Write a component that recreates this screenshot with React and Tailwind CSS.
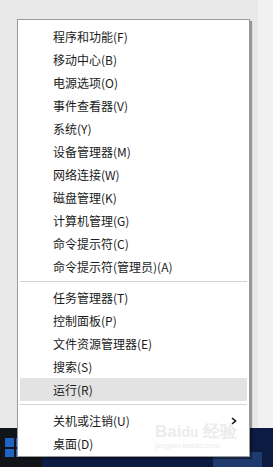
import React from 'react';

const topItems = [
  '程序和功能(F)',
  '移动中心(B)',
  '电源选项(O)',
  '事件查看器(V)',
  '系统(Y)',
  '设备管理器(M)',
  '网络连接(W)',
  '磁盘管理(K)',
  '计算机管理(G)',
  '命令提示符(C)',
  '命令提示符(管理员)(A)',
];

const midItems = ['任务管理器(T)', '控制面板(P)', '文件资源管理器(E)', '搜索(S)', '运行(R)'];

const Row = ({ label, active, arrow }) => (
  <div
    className={
      'mx-[2px] h-[23px] flex items-center justify-between pl-[33px] pr-[10px] ' +
      (active ? 'bg-[#e3e3e3]' : '')
    }
  >
    <span>{label}</span>
    {arrow && (
      <svg width="6" height="8" viewBox="0 0 6 8">
        <path d="M1 1 L4.5 4 L1 7" fill="none" stroke="#111" strokeWidth="1.6" />
      </svg>
    )}
  </div>
);

const Separator = () => <div className="mx-[2px] mt-[3px] mb-[4px] h-px bg-[#d4d4d4]" />;

const App = () => (
  <div
    className="relative w-[273px] h-[467px] overflow-hidden bg-[#e9e9e9] text-[12px] text-[#1b1b1b]"
    style={{ fontFamily: '"Noto Sans CJK SC", "Noto Sans", sans-serif' }}
  >
    {/* lighter strip on the right */}
    <div className="absolute right-0 top-0 w-[15px] h-full bg-[#f1f1f1]" />

    {/* taskbar */}
    <div className="absolute left-0 bottom-0 w-full h-[39px] bg-[#0b1b42] flex">
      <div className="w-[42px] h-full bg-[#111418] pl-[5px] pt-[10px]">
        <div className="grid grid-cols-2 gap-[2px] w-[19px] h-[19px]">
          <div className="bg-[#1f63c6]" />
          <div className="bg-[#1f63c6]" />
          <div className="bg-[#1f63c6]" />
          <div className="bg-[#1f63c6]" />
        </div>
      </div>
      <div className="flex-1" />
      <div className="self-end w-[49px] h-[15px] bg-[#1f3a6c] mr-[11px]" />
    </div>

    {/* context menu */}
    <div className="relative pt-[19px] pl-[17px]">
      <div className="w-[233px] bg-white border border-[#9a9a9a] pt-[5px] pb-px shadow-[2px_2px_1px_rgba(0,0,0,0.35)]">
        {topItems.map((t) => (
          <Row key={t} label={t} />
        ))}
        <Separator />
        {midItems.map((t) => (
          <Row key={t} label={t} active={t === '运行(R)'} />
        ))}
        <Separator />
        <Row label="关机或注销(U)" arrow />
        <Row label="桌面(D)" />
      </div>
    </div>

    {/* faint watermark */}
    <div className="absolute left-[155px] top-[423px] text-[#ececec] leading-none pointer-events-none">
      <div className="text-[17px] font-bold" style={{ fontFamily: '"Liberation Sans", sans-serif' }}>
        Bai<span className="text-[14px]">du</span> 经验
      </div>
      <div className="text-[8px] mt-[2px]" style={{ fontFamily: '"Liberation Sans", sans-serif' }}>
        jingyan.baidu.com
      </div>
    </div>
  </div>
);

export default App;
